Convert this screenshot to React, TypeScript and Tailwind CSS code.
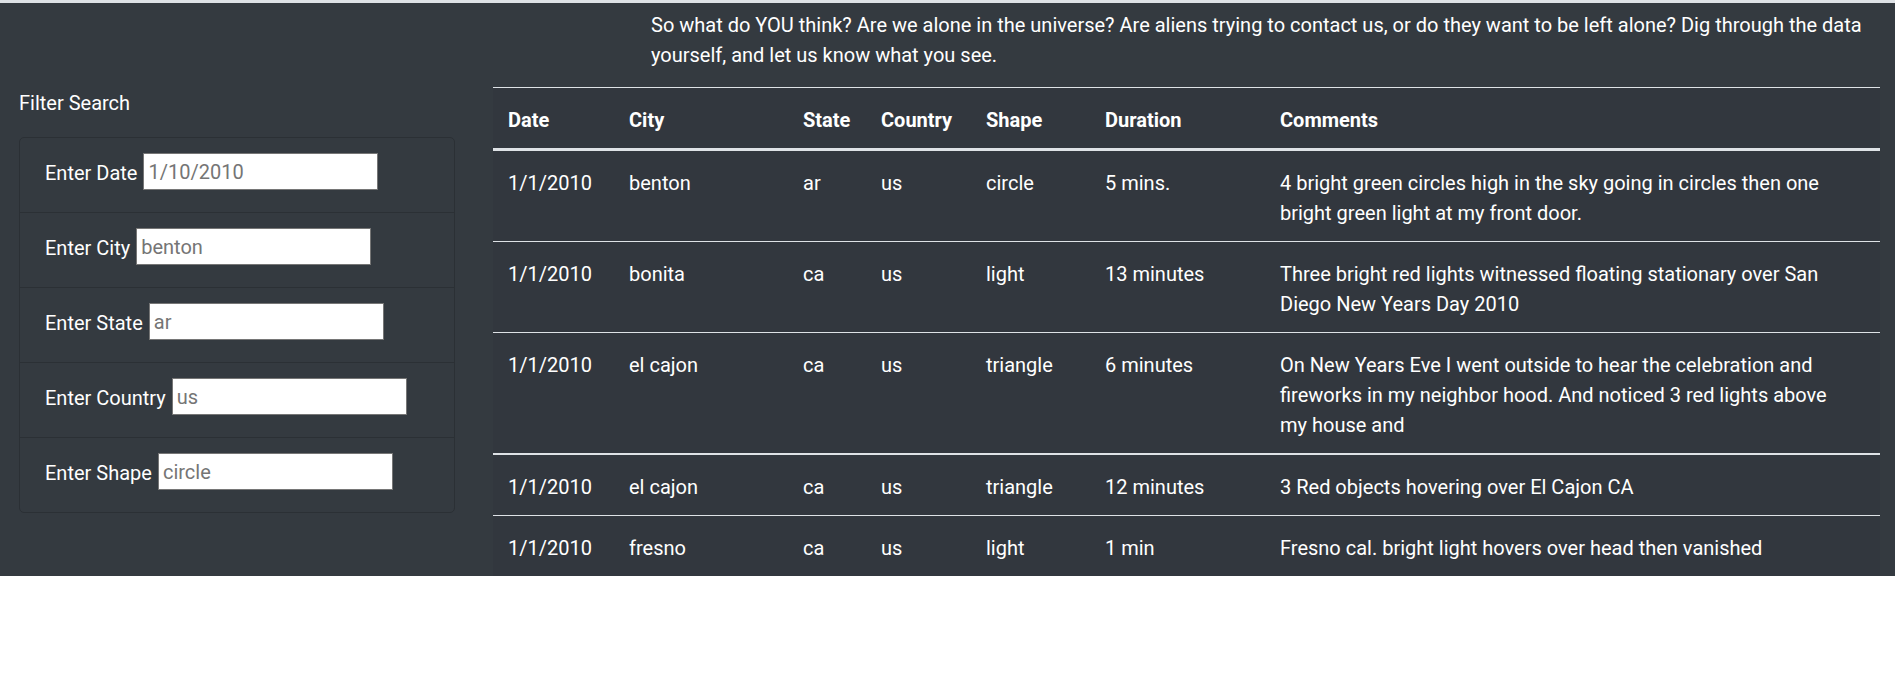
import React from 'react';

type Sighting = {
  date: string;
  city: string;
  state: string;
  country: string;
  shape: string;
  duration: string;
  comments: string;
};

const sightings: Sighting[] = [
  { date: '1/1/2010', city: 'benton', state: 'ar', country: 'us', shape: 'circle', duration: '5 mins.', comments: '4 bright green circles high in the sky going in circles then one bright green light at my front door.' },
  { date: '1/1/2010', city: 'bonita', state: 'ca', country: 'us', shape: 'light', duration: '13 minutes', comments: 'Three bright red lights witnessed floating stationary over San Diego New Years Day 2010' },
  { date: '1/1/2010', city: 'el cajon', state: 'ca', country: 'us', shape: 'triangle', duration: '6 minutes', comments: 'On New Years Eve I went outside to hear the celebration and fireworks in my neighbor hood. And noticed 3 red lights above my house and' },
  { date: '1/1/2010', city: 'el cajon', state: 'ca', country: 'us', shape: 'triangle', duration: '12 minutes', comments: '3 Red objects hovering over El Cajon CA' },
  { date: '1/1/2010', city: 'fresno', state: 'ca', country: 'us', shape: 'light', duration: '1 min', comments: 'Fresno cal. bright light hovers over head then vanished' },
];

const filters = [
  { id: 'datetime', label: 'Enter Date', placeholder: '1/10/2010' },
  { id: 'city', label: 'Enter City', placeholder: 'benton' },
  { id: 'state', label: 'Enter State', placeholder: 'ar' },
  { id: 'country', label: 'Enter Country', placeholder: 'us' },
  { id: 'shape', label: 'Enter Shape', placeholder: 'circle' },
];

const headers = ['Date', 'City', 'State', 'Country', 'Shape', 'Duration', 'Comments'];

export default function App() {
  return (
    <div className="min-h-screen bg-white font-['Roboto','Segoe_UI',sans-serif] text-[20px] leading-[30px]">
      <div className="h-[3px] bg-[#dee2e6]" />
      <div className="bg-[#343a40] text-white">
        <div className="pl-[651px] pr-[19px] pt-[7px] pb-[17px]">
          <p>
            So what do YOU think? Are we alone in the universe? Are aliens trying to contact us, or do they want to be left alone? Dig through the data yourself, and let us know what you see.
          </p>
        </div>

        <div className="flex">
          {/* sidebar filters */}
          <aside className="w-[474px] shrink-0 px-[19px] pt-[1px]">
            <h5 className="mb-[19px]">Filter Search</h5>
            <ul className="border border-[#2b3035] rounded-[5px]">
              {filters.map((f, i) => (
                <li key={f.id} className={`px-[25px] py-[15px] ${i > 0 ? 'border-t border-[#2b3035]' : ''}`}>
                  <div className="flex items-start gap-[6px] h-[44px]">
                    <label htmlFor={f.id} className="mt-[5px]">{f.label}</label>
                    <input
                      id={f.id}
                      type="text"
                      placeholder={f.placeholder}
                      className="w-[235px] h-[37px] bg-white border border-[#767676] px-[4px] text-[20px] text-black placeholder:text-[#757575] outline-none"
                    />
                  </div>
                </li>
              ))}
            </ul>
          </aside>

          {/* results table */}
          <div className="flex-1 pl-[19px] pr-[15px]">
            <table className="w-full table-fixed border-collapse bg-[#32373e] text-left">
              <colgroup>
                <col className="w-[121px]" />
                <col className="w-[174px]" />
                <col className="w-[78px]" />
                <col className="w-[105px]" />
                <col className="w-[119px]" />
                <col className="w-[175px]" />
                <col />
              </colgroup>
              <thead>
                <tr className="border-t border-b-[3px] border-[#dee2e6]">
                  {headers.map(h => (
                    <th key={h} className="px-[15px] pt-[17px] pb-[13px] font-bold align-bottom">{h}</th>
                  ))}
                </tr>
              </thead>
              <tbody>
                {sightings.map((s, i) => (
                  <tr key={i} className={`${i === 3 ? 'border-t-2' : 'border-t'} border-[#dee2e6] align-top`}>
                    <td className="px-[15px] pt-[17px] pb-[13px]">{s.date}</td>
                    <td className="px-[15px] pt-[17px] pb-[13px]">{s.city}</td>
                    <td className="px-[15px] pt-[17px] pb-[13px]">{s.state}</td>
                    <td className="px-[15px] pt-[17px] pb-[13px]">{s.country}</td>
                    <td className="px-[15px] pt-[17px] pb-[13px]">{s.shape}</td>
                    <td className="px-[15px] pt-[17px] pb-[13px]">{s.duration}</td>
                    <td className="pl-[15px] pr-[30px] pt-[17px] pb-[13px]">{s.comments}</td>
                  </tr>
                ))}
              </tbody>
            </table>
          </div>
        </div>
      </div>
    </div>
  );
}
